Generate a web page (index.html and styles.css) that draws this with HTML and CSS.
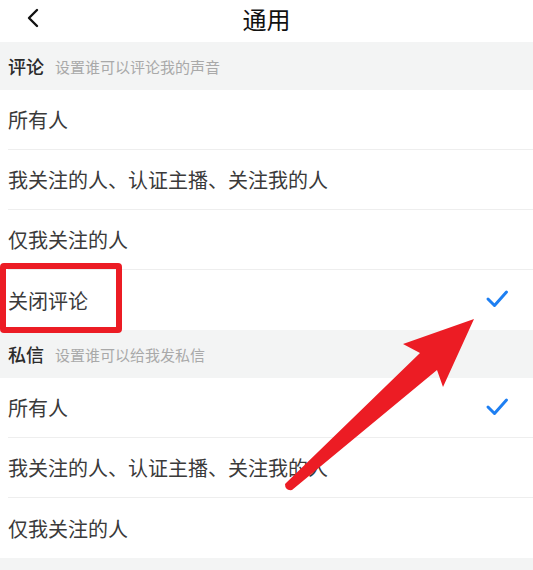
FILE: index.html
```html
<!DOCTYPE html>
<html lang="zh-CN">
<head>
  <meta charset="UTF-8">
  <title>通用</title>
  <link rel="stylesheet" href="styles.css">
</head>
<body>

  <div class="page">
    <div class="topbar">
      <svg class="back" width="14" height="20" viewBox="0 0 14 20">
        <path d="M11 2 L3 10 L11 18" fill="none" stroke="#111" stroke-width="2.4" stroke-linecap="round" stroke-linejoin="round"/>
      </svg>
      <h1>通用</h1>
      <span></span>
    </div>

    <div class="section">
      <span class="section-title">评论</span>
      <span class="section-hint">设置谁可以评论我的声音</span>
    </div>
    <ul class="options">
      <li>所有人</li>
      <li>我关注的人、认证主播、关注我的人</li>
      <li>仅我关注的人</li>
      <li>关闭评论
        <svg class="check" width="24" height="20" viewBox="0 0 24 20">
          <path d="M3 10 L9.5 16.5 L21.5 3" fill="none" stroke="#1e7ff2" stroke-width="3" stroke-linecap="round" stroke-linejoin="round"/>
        </svg>
      </li>
    </ul>

    <div class="section">
      <span class="section-title">私信</span>
      <span class="section-hint">设置谁可以给我发私信</span>
    </div>
    <ul class="options">
      <li>所有人
        <svg class="check" width="24" height="20" viewBox="0 0 24 20">
          <path d="M3 10 L9.5 16.5 L21.5 3" fill="none" stroke="#1e7ff2" stroke-width="3" stroke-linecap="round" stroke-linejoin="round"/>
        </svg>
      </li>
      <li>我关注的人、认证主播、关注我的人</li>
      <li>仅我关注的人</li>
    </ul>

    <div class="section">
      <span class="section-title">弹幕</span>
      <span class="section-hint">设置谁可以发弹幕</span>
    </div>

    <!-- annotation layer -->
    <div class="highlight"></div>
    <svg class="arrow" width="533" height="570" viewBox="0 0 533 570">
      <path d="M474 319 L403 344 L420 353 L285 484 Q285 491 292 490 L437 370 L443 387 Z" fill="#ec1c24"/>
    </svg>
  </div>

</body>
</html>
```

FILE: styles.css
```css
* {
  box-sizing: border-box;
  font-family: "Noto Sans CJK SC", "Noto Sans", sans-serif;
}

body {
  margin: 0;
  background: #ffffff;
  color: #333333;
}

.page {
  position: relative;
  width: 533px;
  height: 570px;
  overflow: hidden;
}

.topbar {
  height: 42px;
  display: grid;
  grid-template-columns: 60px 1fr 60px;
  align-items: center;
  background: #ffffff;
}

.topbar .back {
  margin-left: 26px;
  margin-top: -6px;
}

.topbar h1 {
  margin: -6px 0 0;
  text-align: center;
  font-size: 24px;
  font-weight: 400;
  color: #111111;
}

.section {
  height: 48px;
  display: flex;
  align-items: center;
  gap: 11px;
  padding-left: 8px;
  background: #f3f4f4;
}

.section-title {
  font-size: 18px;
  font-weight: 500;
  color: #2b2b2b;
}

.section-hint {
  font-size: 15px;
  color: #a9a9a9;
}

.options {
  list-style: none;
  margin: 0;
  padding: 0 0 0 8px;
}

.options li {
  height: 60px;
  display: flex;
  align-items: center;
  justify-content: space-between;
  padding-right: 24px;
  font-size: 20px;
  color: #3a3a3a;
  border-bottom: 1px solid #eeeeee;
}

.options li:last-child {
  border-bottom: none;
}

.options .check {
  margin-top: -2px;
}

.highlight {
  position: absolute;
  left: 0;
  top: 263px;
  width: 122px;
  height: 70px;
  border: 6px solid #ec1c24;
  border-radius: 4px;
}

.arrow {
  position: absolute;
  left: 0;
  top: 0;
  pointer-events: none;
}
```
